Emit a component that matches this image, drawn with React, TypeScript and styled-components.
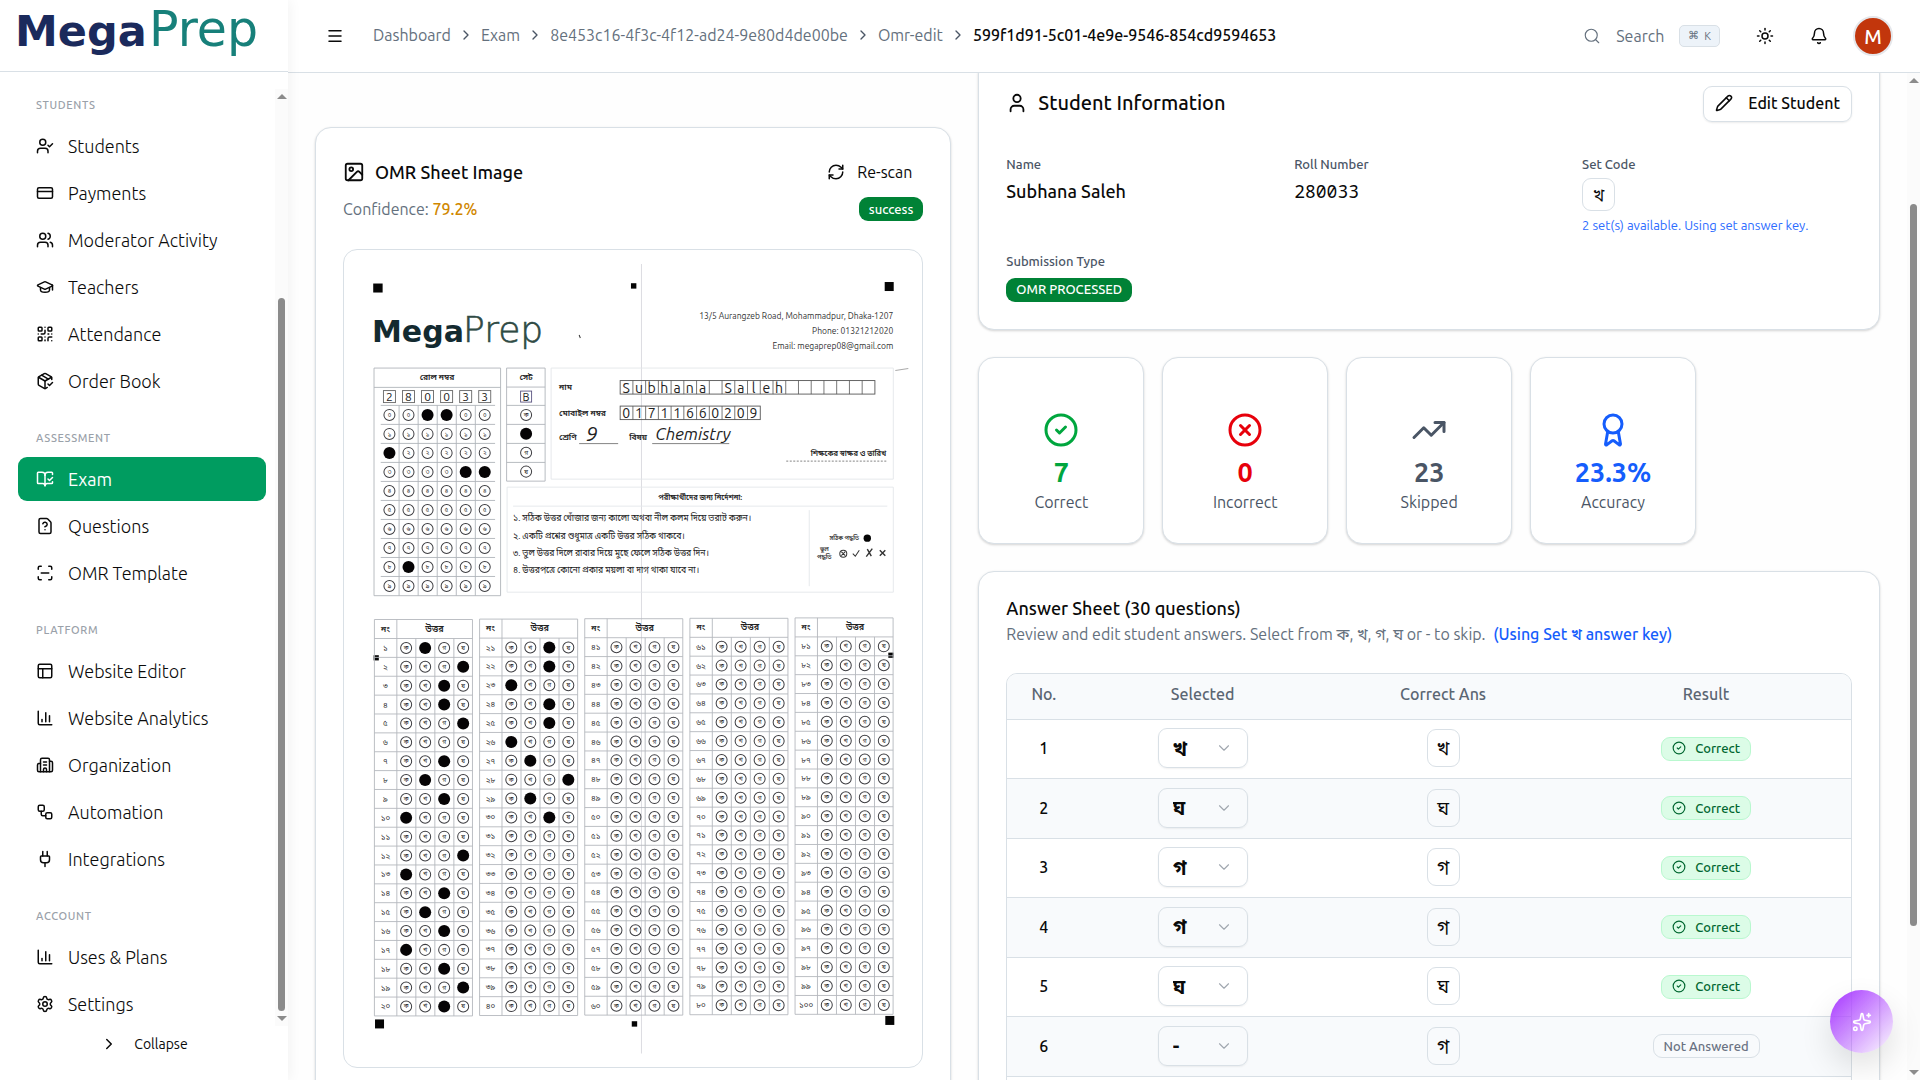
import React from "react";
import styled, { createGlobalStyle, css } from "styled-components";
import {
  UserCheck, CreditCard, Users, GraduationCap, QrCode, PackageCheck, BookOpenCheck, FileQuestionMark,
  ScanLine, PanelsTopLeft, ChartColumn, Building2, Workflow, Plug, Settings, ChevronRight, ChevronDown, Menu,
  Search, Sun, Bell, Image as ImageIcon, RefreshCw, User, Pencil, CircleCheck, CircleX, TrendingUp, Award, Sparkles,
} from "lucide-react";

const line = "#d9e0e6";
const ink = "#0a0a0a";
const slate = "#4a5565";
const muted = "#64707d";
const shadow = "0 1px 3px rgba(0, 0, 0, 0.1), 0 1px 2px rgba(0, 0, 0, 0.08)";

const GlobalStyle = createGlobalStyle`
  *, *::before, *::after { box-sizing: border-box; }
  body { margin: 0; overflow: hidden; background: #fefefe; }
  body, button, select { font-family: Ubuntu, "Open Sans", "Noto Sans", "Noto Sans Bengali", sans-serif; }
  body { font-size: 16px; line-height: 24px; color: ${ink}; }
  h2, p, ul, ol, dl, dd, dt { margin: 0; padding: 0; }
  ul, ol { list-style: none; }
  a { color: inherit; text-decoration: none; }
  button { margin: 0; padding: 0; border: 0; background: none; color: inherit; cursor: pointer; }
  svg { flex: none; display: block; }
`;

const Shell = styled.div`
  display: flex;
  height: 100vh;
`;

/* ---------- sidebar ---------- */

const Sidebar = styled.aside`
  position: relative;
  z-index: 2;
  flex: none;
  width: 288px;
  display: flex;
  flex-direction: column;
  background: #fff;
  box-shadow: 2px 0 12px rgba(0, 0, 0, 0.05);
`;

const Brand = styled.a`
  display: block;
  height: 72px;
  padding: 0 14px;
  border-bottom: 1px solid ${line};
`;

const NavArea = styled.div`
  flex: 1;
  min-height: 0;
  display: flex;
  margin-top: 17px;
`;

const NavGroups = styled.nav`
  flex: 1;
  min-width: 0;
  overflow: hidden;
  display: flex;
  flex-direction: column;
  gap: 19px;
  padding: 0 9px 0 18px;
`;

const GroupLabel = styled.h2`
  height: 32px;
  margin-bottom: 3px;
  padding: 0 18px;
  font-size: 11px;
  line-height: 32px;
  font-weight: 500;
  letter-spacing: 0.06em;
  text-transform: uppercase;
  color: #9aa1a9;
`;

const NavList = styled.ul`
  display: flex;
  flex-direction: column;
  gap: 3px;
`;

const NavLink = styled.a<{ $active?: boolean }>`
  display: flex;
  align-items: center;
  gap: 14px;
  height: 44px;
  padding: 0 18px 1px;
  border-radius: 9px;
  font-size: 18px;
  font-weight: 300;
  ${(p) => p.$active && css`
    background: #009c60;
    color: #fff;
    font-weight: 400;
  `}
`;

const Collapse = styled.button`
  flex: none;
  display: flex;
  align-items: center;
  justify-content: center;
  gap: 16px;
  height: 54px;
  padding-bottom: 18px;
  font-size: 14px;
`;

const Track = styled.div`
  flex: none;
  width: 13px;
  display: flex;
  flex-direction: column;
  align-items: center;
  justify-content: space-between;
  padding: 5px 0;
  background: #fbfbfb;
`;

const Arrow = styled.span<{ $down?: boolean }>`
  border: 5px solid transparent;
  ${(p) => (p.$down ? "border-top-color: #8b8b8b; border-bottom: 0;" : "border-bottom-color: #8b8b8b; border-top: 0;")}
`;

const Rail = styled.span`
  flex: 1;
  display: flex;
  flex-direction: column;
  margin: 4px 0;
`;

const Thumb = styled.span<{ $size: number }>`
  width: 7px;
  border-radius: 4px;
  background: #8b8b8b;
  flex: ${(p) => p.$size};
`;

const Spacer = styled.span<{ $size: number }>`
  flex: ${(p) => p.$size};
`;

const ScrollTrack = ({ before, size, after }: { before: number; size: number; after: number }) => (
  <Track aria-hidden="true">
    <Arrow />
    <Rail>
      <Spacer $size={before} />
      <Thumb $size={size} />
      <Spacer $size={after} />
    </Rail>
    <Arrow $down />
  </Track>
);

/* ---------- top bar ---------- */

const Page = styled.div`
  flex: 1;
  min-width: 0;
  display: flex;
  flex-direction: column;
`;

const TopBar = styled.header`
  flex: none;
  display: flex;
  align-items: center;
  height: 73px;
  padding: 0 27px 0 38px;
  border-bottom: 1px solid ${line};
  background: #fff;
`;

const IconButton = styled.button`
  display: grid;
  place-items: center;
  width: 18px;
  height: 36px;
`;

const Crumbs = styled.ol`
  flex: 1;
  min-width: 0;
  display: flex;
  align-items: center;
  gap: 7px;
  margin-left: 29px;
  padding-bottom: 2px;
  color: ${muted};
`;

const Crumb = styled.li<{ $current?: boolean }>`
  display: flex;
  align-items: center;
  gap: 7px;
  white-space: nowrap;
  ${(p) => p.$current && `color: ${ink}; font-weight: 500;`}
  svg { color: ${slate}; }
`;

const Tools = styled.div`
  display: flex;
  align-items: center;
  gap: 36px;
`;

const SearchButton = styled.button`
  display: flex;
  align-items: center;
  gap: 15px;
  height: 36px;
  padding-bottom: 1px;
  font-size: 16px;
  color: ${muted};
`;

const Kbd = styled.kbd`
  display: flex;
  align-items: center;
  gap: 5px;
  height: 22px;
  padding: 0 8px;
  border: 1px solid ${line};
  border-radius: 5px;
  background: #edf3f9;
  font-family: inherit;
  font-size: 11px;
`;

const Avatar = styled.button`
  width: 40px;
  height: 40px;
  margin-left: -11px;
  border: 2px solid #e5e7eb;
  border-radius: 50%;
  background: #c2360c;
  color: #fff;
  font-size: 20px;
  font-weight: 500;
`;

/* ---------- content ---------- */

const Body = styled.div`
  flex: 1;
  min-height: 0;
  display: flex;
`;

const Content = styled.main`
  flex: 1;
  min-width: 0;
  overflow: hidden;
  display: grid;
  grid-template-columns: repeat(12, minmax(0, 1fr));
  gap: 27px;
  align-items: start;
  padding: 0 27px;
`;

const Card = styled.section`
  padding: 27px;
  border: 1px solid ${line};
  border-radius: 16px;
  background: #fff;
  box-shadow: ${shadow};
`;

const SheetCard = styled(Card)`
  grid-column: span 5;
  margin-top: 54px;
`;

const Details = styled.div`
  grid-column: span 7;
  display: flex;
  flex-direction: column;
  gap: 27px;
  margin-top: -15px;
`;

const Row = styled.div`
  display: flex;
  align-items: center;
  justify-content: space-between;
  height: 36px;
`;

const CardTitle = styled.h2<{ $large?: boolean }>`
  display: flex;
  align-items: center;
  gap: 10px;
  padding-bottom: 2px;
  font-size: ${(p) => (p.$large ? 20 : 18)}px;
  line-height: 24px;
  font-weight: 500;
`;

const AnswerHead = styled.div`
  display: flex;
  flex-direction: column;
  gap: 5px;
  h2 { padding: 0; line-height: 18px; }
`;

const GhostButton = styled.button`
  display: flex;
  align-items: center;
  gap: 12px;
  height: 36px;
  padding: 0 11px 2px;
  font-size: 16px;
  font-weight: 400;
`;

const OutlineButton = styled(GhostButton)`
  gap: 15px;
  border: 1px solid ${line};
  border-radius: 9px;
  box-shadow: 0 1px 2px rgba(0, 0, 0, 0.08);
  font-weight: 500;
`;

const Confidence = styled.p`
  color: ${muted};
  strong { font-weight: 500; color: #d08700; }
`;

const SolidBadge = styled.span`
  display: inline-flex;
  align-items: center;
  height: 24px;
  padding: 0 10px 1px;
  border-radius: 9px;
  background: #008236;
  color: #fff;
  font-size: 13px;
  font-weight: 500;
`;

const SheetFrame = styled.figure`
  margin: 22px 0 0;
  border: 1px solid ${line};
  border-radius: 14px;
  overflow: hidden;
  svg { width: 100%; height: auto; }
`;

const Fields = styled.dl`
  display: grid;
  grid-template-columns: repeat(3, minmax(0, 1fr));
  gap: 18px;
  margin-top: 33px;
`;

const Field = styled.div`
  display: flex;
  flex-direction: column;
  align-items: flex-start;
  gap: 5px;
`;

const Term = styled.dt`
  font-size: 13px;
  line-height: 18px;
  font-weight: 500;
  color: ${slate};
`;

const Value = styled.dd<{ $mono?: boolean }>`
  display: flex;
  align-items: flex-end;
  min-height: 27px;
  font-size: 18px;
  line-height: 27px;
  font-weight: ${(p) => (p.$mono ? 400 : 500)};
  ${(p) => p.$mono && `font-family: "Noto Sans Mono", "DejaVu Sans Mono", monospace;`}
`;

const SetBadge = styled.span<{ $tall?: boolean }>`
  display: inline-grid;
  place-items: center;
  width: 33px;
  height: ${(p) => (p.$tall ? 38 : 33)}px;
  border: 1px solid ${line};
  border-radius: 9px;
  font-size: ${(p) => (p.$tall ? 19 : 17)}px;
  font-weight: 400;
  vertical-align: middle;
`;

const Hint = styled.dd`
  font-size: 13px;
  line-height: 18px;
  color: #2b6bff;
`;

const Stats = styled.div`
  display: grid;
  grid-template-columns: repeat(5, minmax(0, 1fr));
  gap: 18px;
`;

const Stat = styled(Card)<{ $tone: string }>`
  display: flex;
  flex-direction: column;
  align-items: center;
  padding: 54px 27px 29px;
  color: ${slate};
  svg { color: ${(p) => p.$tone}; margin-bottom: 7px; }
  strong {
    font-size: 27px;
    line-height: 35px;
    font-weight: 700;
    color: ${(p) => p.$tone};
  }
`;

const Lead = styled.p`
  color: ${muted};
  strong { margin-left: 4px; font-weight: 500; color: #155dfc; }
`;

const TableFrame = styled.div`
  margin-top: 27px;
  border: 1px solid ${line};
  border-radius: 11px;
  overflow: hidden;
`;

const Table = styled.table`
  width: 100%;
  table-layout: fixed;
  border-collapse: collapse;
  text-align: center;

  th {
    height: 45px;
    padding: 0 0 4px;
    border-bottom: 1px solid ${line};
    background: #f8fafc;
    font-weight: 500;
    color: #5b6673;
  }
  th:nth-child(1) { width: 73px; }
  th:nth-child(2) { width: 29%; }
  th:nth-child(3) { width: 28%; }

  td {
    height: 59px;
    padding: 0 0 1px;
    border-bottom: 1px solid ${line};
    font-weight: 500;
    vertical-align: middle;
  }
  tbody tr:nth-child(even) td { height: 60px; background: #f8fafc; }
`;

const SelectBox = styled.label`
  display: inline-grid;
  align-items: center;
  width: 90px;
  height: 40px;
  vertical-align: middle;
  > * { grid-area: 1 / 1; }
  svg { justify-self: end; margin-right: 15px; color: #a0a7af; pointer-events: none; }
`;

const Select = styled.select`
  appearance: none;
  width: 100%;
  height: 40px;
  padding: 0 14px;
  border: 1px solid ${line};
  border-radius: 9px;
  background: transparent;
  box-shadow: 0 1px 2px rgba(0, 0, 0, 0.06);
  font-size: 20px;
  font-weight: 700;
  color: ${ink};
`;

const ResultBadge = styled.span<{ $ok: boolean }>`
  display: inline-flex;
  align-items: center;
  gap: 9px;
  height: 24px;
  padding: 0 10px 1px;
  border: 1px solid ${(p) => (p.$ok ? "#b9f8cf" : line)};
  border-radius: 9px;
  background: ${(p) => (p.$ok ? "#dcfce7" : "transparent")};
  color: ${(p) => (p.$ok ? "#016630" : "#6a7282")};
  font-size: 13px;
  font-weight: 500;
  vertical-align: middle;
`;

const Assistant = styled.button`
  position: fixed;
  right: 27px;
  bottom: 27px;
  z-index: 3;
  display: grid;
  place-items: center;
  width: 63px;
  height: 63px;
  border-radius: 50%;
  background: linear-gradient(135deg, #ad46ff 10%, rgba(173, 70, 255, 0.08) 95%);
  box-shadow: 0 14px 32px rgba(0, 0, 0, 0.12);
  color: #fff;
`;

/* ---------- drawings ---------- */

const display = `"DejaVu Sans", sans-serif`;

const Logo = () => (
  <svg width="260" height="71" viewBox="0 0 260 71" role="img" aria-label="MegaPrep" fontFamily={display}>
    <text x="1" y="46" fontSize="43" fontWeight="700" fill="#1b2a5c">Mega</text>
    <text x="135" y="46" fontSize="49" fontWeight="400" fill="#17807a">Prep</text>
  </svg>
);

const bn = (n: number) => String(n).replace(/\d/g, (d) => "০১২৩৪৫৬৭৮৯"[+d]);
const letters = ["ক", "খ", "গ", "ঘ"];
const marked: Record<number, number> = {
  1: 2, 2: 4, 3: 3, 4: 3, 5: 4, 7: 3, 8: 2, 9: 3, 10: 1, 12: 4, 13: 1, 14: 3, 15: 2, 16: 3, 17: 1, 18: 3, 19: 4, 20: 3,
  21: 3, 22: 3, 23: 1, 24: 3, 25: 3, 26: 1, 27: 2, 28: 4, 29: 2, 30: 3,
};
const rollMarks = [2, 8, 0, 0, 3, 3];

const Bubble = ({ x, y, text, on }: { x: number; y: number; text: string; on?: boolean }) =>
  on ? (
    <circle cx={x} cy={y} r="6" fill="#060405" />
  ) : (
    <g>
      <circle cx={x} cy={y} r="5.5" fill="none" stroke="#3c3c40" strokeWidth="1" />
      <text x={x} y={y + 2} fontSize="6" fill="#222" textAnchor="middle">{text}</text>
    </g>
  );

const Cells = ({ x, y, count, text }: { x: number; y: number; count: number; text: string }) => (
  <g>
    <rect x={x} y={y} width={count * 12.73} height="13.5" fill="none" stroke="#555" strokeWidth="0.9" />
    {Array.from({ length: count }, (_, i) => (
      <g key={i}>
        {i > 0 && <path d={`M${x + i * 12.73} ${y}v13.5`} stroke="#555" strokeWidth="0.8" />}
        {text[i] && text[i] !== " " && (
          <text x={x + i * 12.73 + 6} y={y + 12} fontSize="14" fill="#222" textAnchor="middle">{text[i]}</text>
        )}
      </g>
    ))}
  </g>
);

const AnswerBlock = ({ index }: { index: number }) => {
  const x = 374.4 + index * 105.1;
  const top = 619.3 - index * 0.4;
  const step = 18.86;
  const bodyTop = top + 19;
  const bottom = bodyTop + step * 20;
  return (
    <g>
      <path
        d={`M${x} ${top}h98V${bottom}h-98zM${x + 22.4} ${top}V${bottom}` +
          [1, 2, 3].map((c) => `M${x + 22.4 + c * 19} ${bodyTop}V${bottom}`).join("") +
          Array.from({ length: 20 }, (_, r) => `M${x} ${bodyTop + r * step}h98`).join("")}
        fill="none" stroke="#b4b8bd" strokeWidth="0.9"
      />
      <text x={x + 11} y={top + 12} fontSize="8.5" fontWeight="600" fill="#222" textAnchor="middle">নং</text>
      <text x={x + 60} y={top + 12} fontSize="9" fontWeight="600" fill="#222" textAnchor="middle">উত্তর</text>
      {Array.from({ length: 20 }, (_, r) => {
        const n = index * 20 + r + 1;
        const cy = bodyTop + step * (r + 0.5);
        return (
          <g key={n}>
            <text x={x + 11} y={cy + 3} fontSize="8" fill="#333" textAnchor="middle">{bn(n)}</text>
            {letters.map((l, c) => (
              <Bubble key={l} x={x + 31.7 + c * 19} y={cy} text={l} on={marked[n] === c + 1} />
            ))}
          </g>
        );
      })}
    </g>
  );
};

const OmrSheet = () => (
  <svg viewBox="344 250 578 817" role="img" aria-label="Scanned OMR sheet" fontFamily={`Ubuntu, "Open Sans", "Noto Sans Bengali", sans-serif`}>
    <path d="M641.3 264V1053" stroke="#dcdce2" strokeWidth="1" />
    <g fill="#050505">
      <rect x="373.2" y="283.5" width="9.4" height="9" />
      <rect x="630.8" y="283.2" width="5.4" height="5.4" />
      <rect x="884.4" y="282" width="9" height="9" />
      <rect x="375" y="1019" width="9" height="9" />
      <rect x="631.6" y="1020.8" width="5.4" height="5.4" />
      <rect x="885" y="1015.5" width="9" height="9" />
      <rect x="373.6" y="655" width="5.2" height="5.2" />
      <rect x="888" y="652.4" width="5.2" height="5.2" />
    </g>
    <g fontFamily={display}>
      <text x="372" y="341.7" fontSize="30" fontWeight="700" fill="#132a30">Mega</text>
      <text x="463" y="341.7" fontSize="36" fontWeight="200" fill="#2f4a44" stroke="#2f4a44" strokeWidth="0.6">Prep</text>
    </g>
    <path d="M579 335l1.2 3" stroke="#333" />
    <g fontSize="8.5" fill="#333" textAnchor="end">
      <text x="893" y="318.5">13/5 Aurangzeb Road, Mohammadpur, Dhaka-1207</text>
      <text x="893" y="333.7">Phone: 01321212020</text>
      <text x="893" y="349.3">Email: megaprep08@gmail.com</text>
    </g>

    <path
      d={"M374 368H500.5V595.5H374zM374 387.3H500.5" +
        Array.from({ length: 10 }, (_, r) => `M380.7 ${405.3 + r * 19}H495`).join("") +
        [1, 2, 3, 4, 5].map((c) => `M${380 + c * 19.05} 405.3V595.5`).join("")}
      fill="none" stroke="#b0b4ba" strokeWidth="0.9"
    />
    <text x="437" y="380" fontSize="8.5" fontWeight="600" fill="#222" textAnchor="middle">রোল নম্বর</text>
    {rollMarks.map((digit, c) => {
      const cx = 389.4 + c * 19.05;
      return (
        <g key={c}>
          <rect x={cx - 6} y="390.5" width="12" height="12" fill="none" stroke="#666" strokeWidth="0.9" />
          <text x={cx} y="401" fontSize="12" fill="#222" textAnchor="middle">{digit}</text>
          {Array.from({ length: 10 }, (_, r) => (
            <Bubble key={r} x={cx} y={414.8 + r * 19} text={bn(r)} on={digit === r} />
          ))}
        </g>
      );
    })}

    <path d="M506.5 368H545V481H506.5zM506.5 387H545M506.5 405.3H545M506.5 424.3H545M506.5 443.3H545M506.5 462.3H545" fill="none" stroke="#b0b4ba" strokeWidth="0.9" />
    <text x="526" y="380" fontSize="8.5" fontWeight="600" fill="#222" textAnchor="middle">সেট</text>
    <rect x="520.5" y="391" width="11" height="11" fill="none" stroke="#5a5480" strokeWidth="0.9" />
    <text x="526" y="400.5" fontSize="11" fill="#222" textAnchor="middle">B</text>
    {letters.map((l, i) => (
      <Bubble key={l} x={526} y={414.8 + i * 18.9} text={l} on={i === 1} />
    ))}

    <path d="M551 368H893V479H551zM507 487H893V592H507zM513 506H887M809 510V586" fill="none" stroke="#e3e6ea" strokeWidth="0.9" />
    <path d="M895 370.5l13-2" stroke="#aaa" />
    <g fontSize="8.5" fontWeight="600" fill="#222">
      <text x="559" y="390">নাম</text>
      <text x="559" y="415.5">মোবাইল নম্বর</text>
      <text x="559" y="439.5">শ্রেণি</text>
      <text x="629" y="439.5">বিষয়</text>
      <text x="886" y="456" fontSize="7.5" textAnchor="end">শিক্ষকের স্বাক্ষর ও তারিখ</text>
      <text x="700" y="500" fontSize="7.5" textAnchor="middle">পরীক্ষার্থীদের জন্য নির্দেশনা:</text>
    </g>
    <Cells x={620} y={380.5} count={20} text="Subhana Saleh" />
    <Cells x={620} y={406} count={11} text="01711660209" />
    <path d="M579 443.5H618M652 443.5H729" stroke="#777" strokeWidth="0.9" />
    <path d="M786 461H886" stroke="#777" strokeWidth="0.9" strokeDasharray="2 1.5" />
    <g fontStyle="italic" fill="#222">
      <text x="586" y="441" fontSize="20">9</text>
      <text x="655" y="440" fontSize="17">Chemistry</text>
    </g>
    <g fontSize="8.7" fill="#222">
      <text x="513" y="521">১. সঠিক উত্তর খোঁজার জন্য কালো অথবা নীল কলম দিয়ে ভরাট করুন।</text>
      <text x="513" y="538.5">২. একটি প্রশ্নের শুধুমাত্র একটি উত্তর সঠিক থাকবে।</text>
      <text x="513" y="556">৩. ভুল উত্তর দিলে রাবার দিয়ে মুছে ফেলে সঠিক উত্তর দিন।</text>
      <text x="513" y="573">৪. উত্তরপত্রে কোনো প্রকার ময়লা বা দাগ থাকা যাবে না।</text>
    </g>
    <g fontSize="6" fontWeight="600" fill="#333" textAnchor="middle">
      <text x="844" y="540">সঠিক পদ্ধতি</text>
      <text x="824" y="551">ভুল</text>
      <text x="824" y="559">পদ্ধতি</text>
    </g>
    <circle cx="867" cy="538" r="3.7" fill="#050505" />
    <g fill="none" stroke="#333" strokeWidth="1">
      <circle cx="843" cy="553.5" r="3.5" />
      <path d="M841 551.5l4 4M845 551.5l-4 4M852.5 553.5l2.5 2.5 4-6" />
      <path d="M866 556.5l6-8M867 549l4 7M879.5 550l5.5 5.5M885 550l-5.5 5.5" strokeWidth="1.4" />
    </g>

    {[0, 1, 2, 3, 4].map((i) => <AnswerBlock key={i} index={i} />)}
  </svg>
);

/* ---------- data ---------- */

const groups = [
  { label: "Students", items: [
    ["Students", UserCheck], ["Payments", CreditCard], ["Moderator Activity", Users],
    ["Teachers", GraduationCap], ["Attendance", QrCode], ["Order Book", PackageCheck],
  ] },
  { label: "Assessment", items: [["Exam", BookOpenCheck], ["Questions", FileQuestionMark], ["OMR Template", ScanLine]] },
  { label: "Platform", items: [
    ["Website Editor", PanelsTopLeft], ["Website Analytics", ChartColumn], ["Organization", Building2],
    ["Automation", Workflow], ["Integrations", Plug],
  ] },
  { label: "Account", items: [["Uses & Plans", ChartColumn], ["Settings", Settings]] },
] as { label: string; items: [string, React.ElementType][] }[];

const crumbs = ["Dashboard", "Exam", "8e453c16-4f3c-4f12-ad24-9e80d4de00be", "Omr-edit", "599f1d91-5c01-4e9e-9546-854cd9594653"];

const stats = [
  { label: "Correct", value: "7", tone: "#00a63e", Icon: CircleCheck },
  { label: "Incorrect", value: "0", tone: "#e7000b", Icon: CircleX },
  { label: "Skipped", value: "23", tone: "#4a5565", Icon: TrendingUp },
  { label: "Accuracy", value: "23.3%", tone: "#155dfc", Icon: Award },
];

const answers = [
  ["খ", "খ"], ["ঘ", "ঘ"], ["গ", "গ"], ["গ", "গ"], ["ঘ", "ঘ"], ["-", "গ"], ["গ", "গ"],
];

export default function App() {
  return (
    <>
      <GlobalStyle />
      <Shell>
        <Sidebar>
          <Brand href="#"><Logo /></Brand>
          <NavArea>
            <NavGroups>
              {groups.map((g) => (
                <div key={g.label}>
                  <GroupLabel>{g.label}</GroupLabel>
                  <NavList>
                    {g.items.map(([name, Icon]) => (
                      <li key={name}>
                        <NavLink href="#" $active={name === "Exam"}>
                          <Icon size={18} />
                          {name}
                        </NavLink>
                      </li>
                    ))}
                  </NavList>
                </div>
              ))}
            </NavGroups>
            <ScrollTrack before={195} size={713} after={1} />
          </NavArea>
          <Collapse type="button"><ChevronRight size={18} />Collapse</Collapse>
        </Sidebar>

        <Page>
          <TopBar>
            <IconButton type="button" aria-label="Toggle menu"><Menu size={18} /></IconButton>
            <Crumbs>
              {crumbs.map((c, i) => (
                <Crumb key={c} $current={i === crumbs.length - 1}>
                  {i > 0 && <ChevronRight size={16} />}
                  {i < crumbs.length - 1 ? <a href="#">{c}</a> : <span>{c}</span>}
                </Crumb>
              ))}
            </Crumbs>
            <Tools>
              <SearchButton type="button">
                <Search size={18} strokeWidth={1.5} />
                Search
                <Kbd><span>⌘</span><span>K</span></Kbd>
              </SearchButton>
              <IconButton type="button" aria-label="Theme"><Sun size={18} /></IconButton>
              <IconButton type="button" aria-label="Notifications"><Bell size={18} /></IconButton>
              <Avatar type="button">M</Avatar>
            </Tools>
          </TopBar>

          <Body>
            <Content>
              <SheetCard>
                <Row>
                  <CardTitle><ImageIcon size={22} />OMR Sheet Image</CardTitle>
                  <GhostButton type="button"><RefreshCw size={18} />Re-scan</GhostButton>
                </Row>
                <Row>
                  <Confidence>Confidence: <strong>79.2%</strong></Confidence>
                  <SolidBadge>success</SolidBadge>
                </Row>
                <SheetFrame><OmrSheet /></SheetFrame>
              </SheetCard>

              <Details>
                <Card>
                  <Row>
                    <CardTitle $large><User size={22} />Student Information</CardTitle>
                    <OutlineButton type="button"><Pencil size={18} />Edit Student</OutlineButton>
                  </Row>
                  <Fields>
                    <Field><Term>Name</Term><Value>Subhana Saleh</Value></Field>
                    <Field><Term>Roll Number</Term><Value $mono>280033</Value></Field>
                    <Field>
                      <Term>Set Code</Term>
                      <dd><SetBadge>খ</SetBadge></dd>
                      <Hint>2 set(s) available. Using set answer key.</Hint>
                    </Field>
                    <Field><Term>Submission Type</Term><Value><SolidBadge>OMR PROCESSED</SolidBadge></Value></Field>
                  </Fields>
                </Card>

                <Stats>
                  {stats.map(({ label, value, tone, Icon }) => (
                    <Stat key={label} $tone={tone}>
                      <Icon size={36} />
                      <strong>{value}</strong>
                      <span>{label}</span>
                    </Stat>
                  ))}
                </Stats>

                <Card>
                  <AnswerHead>
                    <CardTitle>Answer Sheet (30 questions)</CardTitle>
                    <Lead>
                      Review and edit student answers. Select from ক, খ, গ, ঘ or - to skip. <strong>(Using Set খ answer key)</strong>
                    </Lead>
                  </AnswerHead>
                  <TableFrame>
                    <Table>
                      <thead>
                        <tr><th>No.</th><th>Selected</th><th>Correct Ans</th><th>Result</th></tr>
                      </thead>
                      <tbody>
                        {answers.map(([picked, right], i) => (
                          <tr key={i}>
                            <td>{i + 1}</td>
                            <td>
                              <SelectBox>
                                <Select defaultValue={picked} aria-label={`Answer ${i + 1}`}>
                                  {[...letters, "-"].map((l) => <option key={l}>{l}</option>)}
                                </Select>
                                <ChevronDown size={18} strokeWidth={1.5} />
                              </SelectBox>
                            </td>
                            <td><SetBadge $tall>{right}</SetBadge></td>
                            <td>
                              <ResultBadge $ok={picked === right}>
                                {picked === right && <CircleCheck size={14} />}
                                {picked === right ? "Correct" : "Not Answered"}
                              </ResultBadge>
                            </td>
                          </tr>
                        ))}
                      </tbody>
                    </Table>
                  </TableFrame>
                </Card>
              </Details>
            </Content>
            <ScrollTrack before={116} size={719} after={139} />
          </Body>
        </Page>
      </Shell>
      <Assistant type="button" aria-label="Open assistant"><Sparkles size={20} /></Assistant>
    </>
  );
}
